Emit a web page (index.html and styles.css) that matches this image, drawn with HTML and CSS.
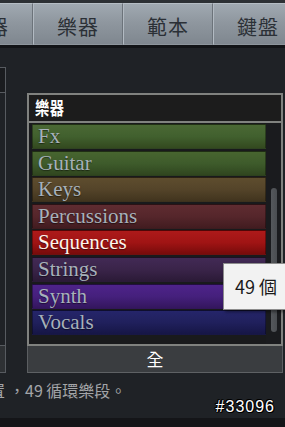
FILE: index.html
```html
<!DOCTYPE html>
<html lang="zh-Hant">
<head>
<meta charset="utf-8">
<link rel="stylesheet" href="styles.css">
</head>
<body>
<div class="screen">
  <div class="topstrip"></div>
  <nav class="tabs">
    <div class="tab">樂器</div>
    <div class="tab">樂器</div>
    <div class="tab">範本</div>
    <div class="tab">鍵盤</div>
  </nav>
  <div class="tabs-shadow"></div>
  <main class="content">
    <div class="stub">
      <div class="stub-frame"><div class="stub-title"></div></div>
      <div class="stub-btn"></div>
    </div>
    <section class="panel">
      <div class="frame">
        <header class="title"><span class="title-text">樂器</span></header>
        <div class="body">
          <ul class="list">
            <li class="item fx">Fx</li>
            <li class="item guitar">Guitar</li>
            <li class="item keys">Keys</li>
            <li class="item perc">Percussions</li>
            <li class="item seq">Sequences</li>
            <li class="item strings">Strings</li>
            <li class="item synth">Synth</li>
            <li class="item vocals">Vocals</li>
          </ul>
          <div class="scroll"><div class="thumb"></div></div>
        </div>
      </div>
      <div class="all">全</div>
    </section>
  </main>
  <footer class="footer">
    <p class="status"><span class="cut">置</span><span class="comma">，</span>49 循環樂段。</p>
    <div class="id">#33096</div>
  </footer>
  <div class="bottom"></div>
  <div class="tooltip">49 個</div>
</div>
</body>
</html>
```
FILE: styles.css
```css
html, body {
  margin: 0;
  padding: 0;
}
body {
  width: 285px;
  height: 427px;
  overflow: hidden;
  background: #1f2226;
  font-family: "Noto Sans CJK TC", "Liberation Sans", sans-serif;
}
.screen {
  position: relative;
  width: 285px;
  height: 427px;
  overflow: hidden;
  display: flex;
  flex-direction: column;
}
.topstrip {
  height: 3px;
  background: #2c3034;
}
.tabs {
  height: 42px;
  display: flex;
  margin-left: -57px;
}
.tab {
  flex: 0 0 90px;
  box-sizing: border-box;
  height: 42px;
  border-left: 1px solid #b2bac2;
  border-right: 1px solid #6c737a;
  border-top: 1px solid #b5bdc4;
  border-bottom: 1px solid #8e969d;
  background: linear-gradient(#a0a9b1, #8f979f 45%, #7f878f);
  color: #2b3036;
  font-size: 20px;
  line-height: 40px;
  padding-top: 3px;
  text-align: center;
  letter-spacing: 1px;
}
.tabs-shadow {
  height: 3px;
  background: #121417;
}
.content {
  height: 328px;
  display: flex;
  gap: 21px;
}
.stub {
  width: 6px;
  margin-top: 19px;
  display: flex;
  flex-direction: column;
}
.stub-frame {
  box-sizing: border-box;
  height: 279px;
  border-top: 1px solid #575b60;
  border-right: 1px solid #575b60;
  border-bottom: 1px solid #575b60;
}
.stub-title {
  height: 24px;
  border-bottom: 1px solid #575b60;
  background: #1a1c1f;
}
.stub-btn {
  height: 27px;
  box-sizing: border-box;
  border-right: 1px solid #575b60;
  border-bottom: 1px solid #575b60;
  background: #2e3134;
}
.panel {
  width: 256px;
  margin-top: 45px;
  display: flex;
  flex-direction: column;
}
.frame {
  box-sizing: border-box;
  height: 253px;
  border: 2px solid #80827f;
  background: #1b1c1e;
  display: flex;
  flex-direction: column;
}
.title {
  height: 26px;
  background: #1c1c1c;
  border-bottom: 2px solid #80827f;
  padding-left: 6px;
}
.title-text {
  display: inline-block;
  color: #ffffff;
  font-size: 15px;
  font-weight: 700;
  line-height: 24px;
  letter-spacing: 0.5px;
  transform: scale(0.95, 1.22);
  transform-origin: 0 55%;
}
.body {
  flex: 1;
  display: flex;
  background: #191a1c;
}
.list {
  list-style: none;
  margin: 0;
  padding: 1px 0 0 3px;
  width: 234px;
}
.item {
  box-sizing: border-box;
  height: 25px;
  margin-bottom: 1.6px;
  padding-left: 5px;
  font-family: "Liberation Serif", "Times New Roman", serif;
  font-size: 21px;
  line-height: 23px;
  color: #a7b1ba;
  border: 1px solid rgba(0, 0, 0, 0.35);
  text-shadow: 0 1px 1px rgba(0, 0, 0, 0.5);
  white-space: nowrap;
  overflow: hidden;
}
.fx { background: linear-gradient(#4a6834, #41602e 50%, #33491f); }
.guitar { background: linear-gradient(#47652f, #3e5b2b 50%, #30461f); }
.keys { background: linear-gradient(#5e4d2e, #544429 50%, #41341e); }
.perc { background: linear-gradient(#5f2c31, #55262b 50%, #421c20); }
.seq { background: linear-gradient(#ad1a1a, #a01414 50%, #780b0b); color: #fff3ea; }
.strings { background: linear-gradient(#422a55, #3a2449 50%, #2b1a37); }
.synth { background: linear-gradient(#4e238a, #45207c 50%, #34165e); }
.vocals { background: linear-gradient(#25256a, #20205c 50%, #161646); }
.scroll {
  width: 15px;
  background: #1a1b1e;
  display: flex;
  justify-content: center;
  padding-top: 65px;
  padding-bottom: 12px;
  box-sizing: border-box;
}
.thumb {
  width: 6px;
  border-radius: 3px;
  background: linear-gradient(90deg, #55585c, #4a4d51);
  height: 100%;
}
.all {
  box-sizing: border-box;
  height: 27px;
  background: #3a3d40;
  border-left: 1px solid #5b5e61;
  border-right: 1px solid #5b5e61;
  border-bottom: 1px solid #5e6164;
  color: #ffffff;
  font-size: 17px;
  line-height: 26px;
  text-align: center;
}
.footer {
  height: 45px;
  box-sizing: border-box;
  padding-top: 7px;
  display: flex;
  flex-direction: column;
}
.status {
  margin: 0;
  height: 20px;
  line-height: 20px;
  font-size: 16px;
  color: #a3a5a8;
  white-space: nowrap;
}
.cut {
  display: inline-block;
  margin-left: -11px;
  margin-right: 4px;
}
.comma {
  display: inline-block;
  width: 8px;
  margin-right: 8px;
  text-align: right;
  overflow: visible;
}
.id {
  align-self: flex-end;
  margin-right: 10px;
  height: 14px;
  line-height: 14px;
  font-family: "Liberation Sans", Arial, sans-serif;
  font-size: 16px;
  letter-spacing: 1px;
  color: #ffffff;
  text-shadow: 1px 0 0 #000, -1px 0 0 #000, 0 1px 0 #000, 0 -1px 0 #000, 1px 1px 0 #000, -1px -1px 0 #000;
}
.bottom {
  height: 9px;
  background: #141518;
}
.tooltip {
  position: absolute;
  left: 223px;
  top: 263px;
  width: 80px;
  height: 47px;
  box-sizing: border-box;
  border: 1px solid #8c8c8c;
  background: #f2f2f2;
  box-shadow: 2px 2px 3px rgba(0, 0, 0, 0.45);
  padding-left: 11px;
  font-size: 18px;
  line-height: 45px;
  color: #1a1a1a;
  white-space: nowrap;
}
```
